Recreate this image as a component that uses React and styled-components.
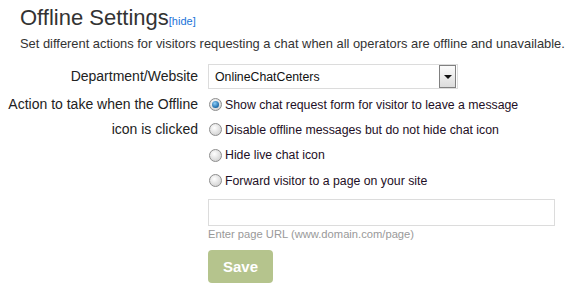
import { useState } from "react";
import styled, { createGlobalStyle } from "styled-components";

const Global = createGlobalStyle`
  body {
    margin: 0;
    background: #fff;
    font-family: "Liberation Sans", Arial, sans-serif;
    color: #333;
  }
`;

const Page = styled.div`
  width: 571px;
  padding-top: 5px;
`;

const Header = styled.div`
  padding-left: 20px;
`;

const Title = styled.h1`
  margin: 0;
  font-size: 22px;
  font-weight: normal;
  line-height: 26px;
  color: #333;
  & a {
    font-size: 11px;
    color: #1a73d9;
    text-decoration: none;
  }
`;

const Desc = styled.p`
  margin: 2px 0 0;
  font-size: 12.9px;
  line-height: 16px;
  color: #333;
`;

const Form = styled.div`
  display: grid;
  grid-template-columns: 198px 1fr;
  column-gap: 10px;
  margin-top: 12px;
  font-size: 14px;
  color: #222;
`;

const Label = styled.div`
  text-align: right;
  line-height: ${(p) => p.lh || 25.3}px;
  padding-top: ${(p) => p.top || 0}px;
`;

const Select = styled.div`
  width: 250px;
  height: 25px;
  box-sizing: border-box;
  border: 1px solid #dcdcdc;
  display: flex;
  align-items: center;
  justify-content: space-between;
  padding: 0 1px 0 6px;
  font-size: 12.3px;
  color: #111;
`;

const ArrowBox = styled.div`
  width: 17px;
  height: 23px;
  box-sizing: border-box;
  border: 1px solid #808080;
  background: linear-gradient(#fbfbfb, #dcdcdc);
  display: flex;
  align-items: center;
  justify-content: center;
  &::after {
    content: "";
    border-left: 4px solid transparent;
    border-right: 4px solid transparent;
    border-top: 4px solid #111;
  }
`;

const Options = styled.div`
  display: flex;
  flex-direction: column;
  padding-top: 3px;
`;

const Option = styled.label`
  display: flex;
  align-items: center;
  gap: 3px;
  height: 25.3px;
  font-size: 12.3px;
  color: #1e0f26;
`;

const Radio = styled.span`
  width: 13px;
  height: 13px;
  box-sizing: border-box;
  border-radius: 50%;
  border: 1px solid #8d8d8d;
  background: radial-gradient(circle at 40% 35%, #fff, #d2d2d2 80%);
  display: flex;
  align-items: center;
  justify-content: center;
  margin-left: 1px;
  &::after {
    content: "";
    display: ${(p) => (p.checked ? "block" : "none")};
    width: 7px;
    height: 7px;
    border-radius: 50%;
    background: radial-gradient(circle at 40% 35%, #8ccdf7, #0a5a9c 80%);
  }
`;

const UrlInput = styled.div`
  width: 347px;
  height: 27px;
  box-sizing: border-box;
  border: 1px solid #dcdcdc;
  margin-top: 6px;
`;

const Hint = styled.div`
  font-size: 11.2px;
  line-height: 13px;
  color: #999;
  margin-top: 2px;
`;

const SaveButton = styled.button`
  display: block;
  width: 65px;
  height: 33px;
  margin-top: 9px;
  border: none;
  border-radius: 4px;
  background: #b5c48d;
  color: #fff;
  font-family: "Liberation Sans", Arial, sans-serif;
  font-weight: bold;
  font-size: 15px;
  padding: 0;
`;

const choices = [
  "Show chat request form for visitor to leave a message",
  "Disable offline messages but do not hide chat icon",
  "Hide live chat icon",
  "Forward visitor to a page on your site",
];

export default function App() {
  const [choice, setChoice] = useState(0);
  return (
    <Page>
      <Global />
      <Header>
        <Title>
          Offline Settings<a href="#">[hide]</a>
        </Title>
        <Desc>
          Set different actions for visitors requesting a chat when all operators are offline and unavailable.
        </Desc>
      </Header>
      <Form>
        <Label lh={25}>Department/Website</Label>
        <Select>
          OnlineChatCenters
          <ArrowBox />
        </Select>
        <Label top={3}>
          Action to take when the Offline
          <br />
          icon is clicked
        </Label>
        <div>
          <Options>
            {choices.map((c, i) => (
              <Option key={c} onClick={() => setChoice(i)}>
                <Radio checked={choice === i} />
                {c}
              </Option>
            ))}
          </Options>
          <UrlInput />
          <Hint>Enter page URL (www.domain.com/page)</Hint>
          <SaveButton>Save</SaveButton>
        </div>
      </Form>
    </Page>
  );
}
